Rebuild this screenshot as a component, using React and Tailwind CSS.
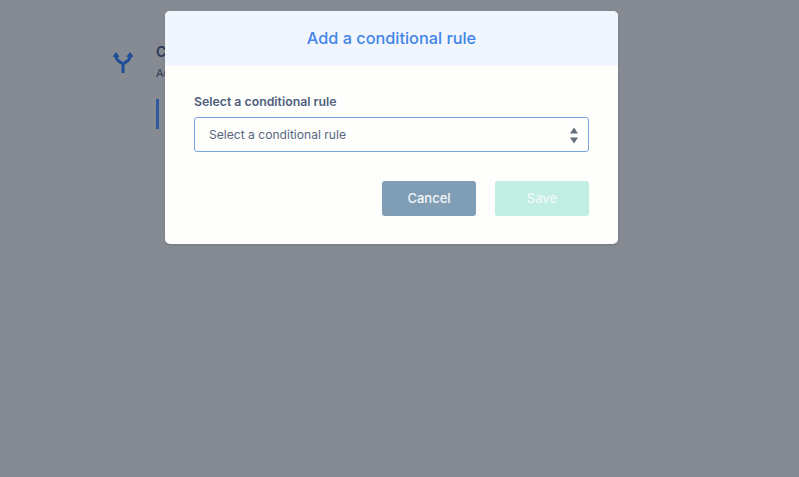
import React from "react";

const font = { fontFamily: "Inter, 'Liberation Sans', sans-serif" };

export default function App() {
  return (
    <div className="relative h-[477px] w-[799px] overflow-hidden bg-[#858a93] font-['Inter',sans-serif]" style={font}>
      <div className="flex pl-[113px] pt-[44px]">
        <svg width="20" height="22" viewBox="0 0 20 22" fill="none" stroke="#1f4e96" strokeWidth="3" className="mt-[8px]">
          <path d="M10 21 V12 M10 12 L5 8.5 Q3 7 3 3 M10 12 L15 8.5 Q17 7 17 3" />
          <path d="M0.4 5 L3 1.6 L5.6 5 M14.4 5 L17 1.6 L19.6 5" strokeWidth="2" />
        </svg>
        <div className="ml-[23px] flex flex-col">
          <div className="text-[14px] font-semibold leading-[16px] text-[#2a3a55]">Conditional</div>
          <div className="mt-[5px] text-[11px] leading-[16px] text-[#2a3a55]">Add</div>
          <div className="mt-[18px] h-[30px] w-[3px] bg-[#2d5a9e]" />
        </div>
      </div>

      <div className="absolute inset-0 pl-[165px] pt-[11px]">
        <div className="h-[233px] w-[453px] overflow-hidden rounded-[5px] bg-[#fefefc] shadow-sm">
          <div className="flex h-[55px] items-center justify-center bg-[#f1f5fe] pb-[1px] text-[16.3px] font-medium text-[#4285e8]">
            Add a conditional rule
          </div>
          <div className="px-[29px] pt-[28px]">
            <div className="text-[12.3px] font-semibold leading-[16px] text-[#4f5f7c]">Select a conditional rule</div>
            <div className="mt-[7px] flex h-[35px] items-center justify-between rounded-[3px] border-[1.5px] border-[#7ba6dc] bg-[#fefefc] pl-[14px] pr-[9px] pt-[1px]">
              <span className="text-[12.1px] text-[#57667f]">Select a conditional rule</span>
              <svg width="10" height="17" viewBox="0 0 10 17" fill="#666d7a">
                <path d="M5 0.5 L9 6.5 H1 Z" />
                <path d="M1 10.5 H9 L5 16.5 Z" />
              </svg>
            </div>
            <div className="mt-[29px] flex justify-end gap-[19px]">
              <button className="h-[35px] w-[94px] rounded-[3px] bg-[#7f9eb6] text-[13px] font-medium text-[#f3f6f8]">Cancel</button>
              <button className="h-[35px] w-[94px] rounded-[3px] bg-[#c0eee2] text-[13px] font-medium text-[#eef9f6]">Save</button>
            </div>
          </div>
        </div>
      </div>
    </div>
  );
}
